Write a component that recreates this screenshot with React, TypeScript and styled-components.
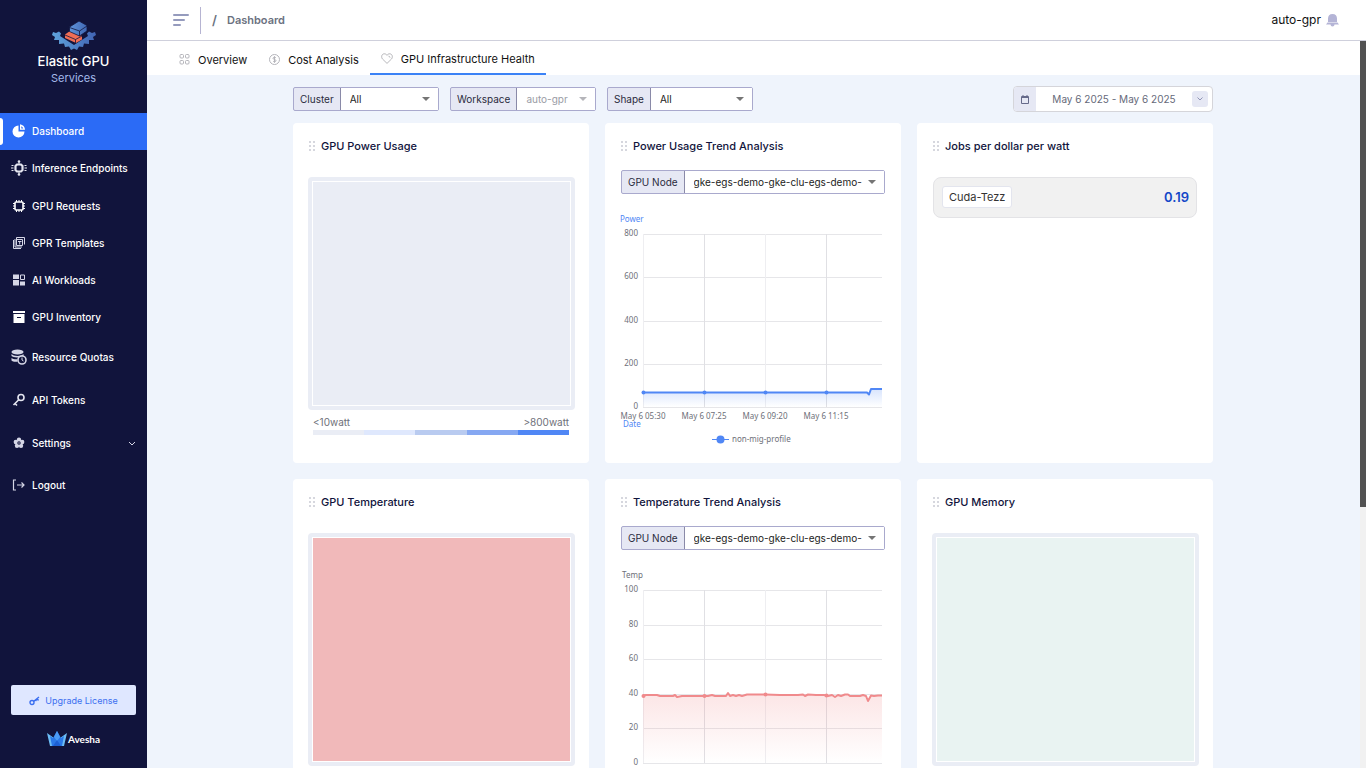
import React from 'react';
import styled, { createGlobalStyle, css } from 'styled-components';

const Global = createGlobalStyle`
  *, *::before, *::after { box-sizing: border-box; }
  html, body, #root { height: 100%; }
  body { margin: 0; overflow: hidden; font-family: Inter, "Open Sans", sans-serif; color: #11143c; }
  button, select, input { font: inherit; }
  svg { display: block; flex: none; }
  h1, h2, p, ul { margin: 0; padding: 0; }
`;

const Shell = styled.div`
  display: flex;
  height: 100vh;
`;

/* ---------- sidebar ---------- */

const Sidebar = styled.aside`
  display: flex;
  flex-direction: column;
  flex: none;
  width: 147px;
  background: #11143c;
  color: #fff;
`;

const Brand = styled.div`
  display: flex;
  flex-direction: column;
  align-items: center;
  height: 113px;
  padding-top: 20px;
`;

const BrandName = styled.div`
  font-size: 13px;
  line-height: 19px;
  font-weight: 500;
`;

const BrandSub = styled.div`
  font-size: 11px;
  line-height: 14px;
  color: #a3b9ea;
`;

const Nav = styled.nav`
  flex: 1;
`;

const NavLink = styled.a<{ $h: number; $active?: boolean }>`
  position: relative;
  display: flex;
  align-items: center;
  gap: 5px;
  height: ${p => p.$h}px;
  padding: 0 11px 1px;
  font-size: 10px;
  font-weight: 500;
  line-height: 16px;
  color: #fff;
  text-decoration: none;
  ${p => p.$active && css`
    background: #2b6bf6;
    &::before {
      content: '';
      position: absolute;
      left: 0;
      top: 5px;
      bottom: 5px;
      width: 3px;
      background: #fff;
      border-radius: 0 3px 3px 0;
    }
  `}
`;

const NavText = styled.span`
  flex: 1;
  white-space: nowrap;
`;

const SideFoot = styled.div`
  display: flex;
  flex-direction: column;
  align-items: center;
  gap: 15px;
  padding: 0 11px 20px;
`;

const Upgrade = styled.button`
  display: flex;
  align-items: center;
  justify-content: center;
  gap: 5px;
  width: 100%;
  height: 30px;
  border: 0;
  border-radius: 2px;
  background: #dfe7ff;
  color: #3b6ff0;
  font-size: 9px;
`;

const Company = styled.div`
  display: flex;
  align-items: center;
  gap: 1px;
  height: 18px;
  font-family: Lato, sans-serif;
  font-size: 10px;
  font-weight: 700;
`;

/* ---------- header ---------- */

const Main = styled.main`
  position: relative;
  display: flex;
  flex-direction: column;
  flex: 1;
  min-width: 0;
  background: #eff4fc;
`;

const TopBar = styled.header`
  display: flex;
  align-items: center;
  flex: none;
  height: 41px;
  padding: 0 27px 0 26px;
  border-bottom: 1px solid #cfd0dc;
  background: #fff;
`;

const MenuButton = styled.button`
  padding: 0;
  border: 0;
  background: none;
`;

const Divider = styled.span`
  width: 1px;
  height: 27px;
  margin: 0 11px;
  background: #b6b4d2;
`;

const Crumb = styled.h1`
  display: flex;
  align-items: center;
  gap: 10px;
  flex: 1;
  font-size: 11px;
  font-weight: 600;
  line-height: 16px;
  color: #6b7280;
`;

const Slash = styled.span`
  font-size: 13px;
`;

const User = styled.div`
  display: flex;
  align-items: center;
  gap: 5px;
  font-size: 12px;
  line-height: 16px;
  color: #111;
`;

const Tabs = styled.nav`
  display: flex;
  flex: none;
  height: 34px;
  padding-left: 21px;
  background: #fff;
`;

const Tab = styled.a<{ $active?: boolean }>`
  display: flex;
  align-items: center;
  gap: 8px;
  padding: ${p => (p.$active ? '3px 11px 0' : '5px 11px 0')};
  border-bottom: 2px solid ${p => (p.$active ? '#3b82f6' : 'transparent')};
  font-size: 11px;
  line-height: 16px;
  color: #111;
  text-decoration: none;
  white-space: nowrap;
`;

/* ---------- content ---------- */

const Scroller = styled.div`
  flex: 1;
  min-height: 0;
  overflow: hidden;
  padding: 11px 7px 0 0;
`;

const Content = styled.div`
  max-width: 920px;
  margin: 0 auto;
`;

const ScrollTrack = styled.div`
  position: absolute;
  top: 41px;
  right: 0;
  bottom: 0;
  width: 6px;
  background: #f1f1f1;
`;

const ScrollThumb = styled.div`
  height: 466px;
  background: #525252;
`;

const Filters = styled.div`
  display: flex;
  align-items: center;
  gap: 11px;
  height: 26px;
  margin-bottom: 11px;
`;

const Field = styled.label<{ $w: string }>`
  display: flex;
  align-items: stretch;
  width: ${p => p.$w};
  height: 24px;
  border: 1px solid #a9a9cd;
  border-radius: 2px;
  background: #e6e8f4;
  font-size: 10px;
  line-height: 22px;
  color: #2a2b3d;
`;

const FieldName = styled.span`
  padding: 0 6px;
  white-space: nowrap;
`;

const SelectWrap = styled.span`
  position: relative;
  display: flex;
  flex: 1;
  min-width: 0;
  border-left: 1px solid #8a8aa8;
  background: #fff;
`;

const Select = styled.select`
  width: 100%;
  padding: 0 19px 0 9px;
  border: 0;
  background: none;
  appearance: none;
  color: #222;
  opacity: 1;
  text-overflow: clip;
  &:disabled { color: #9a9ca5; }
`;

const Caret = styled.svg`
  position: absolute;
  right: 8px;
  top: 9px;
`;

const DateRange = styled.div`
  display: flex;
  align-items: center;
  width: 200px;
  height: 26px;
  margin-left: auto;
  border: 1px solid #d5d5da;
  border-radius: 4px;
  background: #fff;
  overflow: hidden;
`;

const DateIcon = styled.span`
  display: flex;
  align-items: center;
  justify-content: center;
  align-self: stretch;
  width: 22px;
  background: #e6e8f4;
`;

const DateText = styled.span`
  flex: 1;
  text-align: center;
  font-size: 10px;
  line-height: 16px;
  color: #666a7a;
`;

const DateButton = styled.button`
  display: flex;
  align-items: center;
  justify-content: center;
  width: 16px;
  height: 16px;
  margin-right: 4px;
  padding: 0;
  border: 0;
  border-radius: 3px;
  background: #e6e8f4;
`;

const Grid = styled.div`
  display: grid;
  grid-template-columns: repeat(3, 1fr);
  grid-auto-rows: 340px;
  gap: 16px;
`;

const Card = styled.section`
  display: flex;
  flex-direction: column;
  min-width: 0;
  padding: 15px 14px 0 15px;
  border-radius: 4px;
  background: #fff;
`;

const CardTitle = styled.h2`
  display: flex;
  align-items: center;
  gap: 6px;
  margin-bottom: 15px;
  font-size: 11px;
  font-weight: 500;
  line-height: 17px;
  color: #11143c;
`;

const CardField = styled.div`
  margin: 0 2px 0 1px;
`;

const Tile = styled.div<{ $fill: string }>`
  flex: none;
  height: 233px;
  margin-top: 7px;
  padding: 4px;
  border-radius: 4px;
  background: #eaedf5;
  &::before {
    content: '';
    display: block;
    height: 100%;
    border: 1px solid #fff;
    background: ${p => p.$fill};
  }
`;

const Legend = styled.div`
  margin: 4px 6px 0 5px;
`;

const LegendLabels = styled.div`
  display: flex;
  justify-content: space-between;
  font-size: 10px;
  line-height: 16px;
  color: #6e7079;
`;

const LegendBar = styled.div`
  display: flex;
  height: 5px;
`;

const Swatch = styled.span<{ $c: string }>`
  flex: 1;
  background: ${p => p.$c};
`;

const Job = styled.div`
  display: flex;
  align-items: center;
  justify-content: space-between;
  height: 41px;
  margin: 7px 2px 0 1px;
  padding: 0 7px 2px 8px;
  border: 1px solid #e3e3e6;
  border-radius: 8px;
  background: #f1f1f1;
`;

const JobName = styled.span`
  padding: 0 6px;
  border: 1px solid #e3e5ee;
  border-radius: 3px;
  background: #fff;
  font-size: 11px;
  line-height: 20px;
  color: #333;
`;

const JobValue = styled.span`
  font-size: 13px;
  font-weight: 600;
  color: #1447c8;
`;

const Chart = styled.svg`
  margin-top: 16px;
  width: 100%;
  height: 240px;
  overflow: visible;
  font-family: "Noto Sans", sans-serif;
  font-size: 8px;
`;

/* ---------- icons ---------- */

const BrandLogo = () => (
  <svg width="46" height="32" viewBox="0 0 46 32" aria-hidden="true">
    <defs>
      <linearGradient id="gear" x1="0" x2="1"><stop offset="0" stopColor="#5fa3dc" /><stop offset="1" stopColor="#4164b4" /></linearGradient>
      <linearGradient id="brick" x1="0" x2="1"><stop offset="0" stopColor="#6095da" /><stop offset="1" stopColor="#4068b4" /></linearGradient>
    </defs>
    <path fill="url(#gear)" d="M2 12L5 13 8 11.500 10 13.500 9 16 23 25 37 16 36 13.500 38 11.500 41 13 44 12 45 15 42 17 43 20 38 20 38 24 33 23.500 32 27 28 26.500 26 30 23 28.500 20 30 18 26.500 14 27 13 23.500 8 24 8 20 3 20 4 17 1 15z" />
    <path fill="#ef6d55" d="M14 14.500l5-3.500 12 5v3.500L25 23l-11-5z" />
    <path stroke="#11143c" strokeWidth=".8" fill="none" d="M14 15l10.500 4.500 6.500-3.500M24.500 19.500V23" />
    <path fill="url(#brick)" stroke="#11143c" strokeWidth=".8" d="M18.500 7L28 1l8 4.500v5.500l-7.500 5-10-4.500z" />
    <path stroke="#11143c" strokeWidth=".8" fill="none" d="M18.500 7.500l10 3.500 7.500-5M28.500 11v5" />
  </svg>
);

const icons: Record<string, React.ReactNode> = {
  pie: <><path fill="#fff" d="M7.500 2.500a6 6 0 1 0 6 6h-6z" /><path fill="#fff" d="M9 1.200a6 6 0 0 1 5 5.600H9z" /><path fill="#2b6bf6" d="M10.300 3.200a4 4 0 0 1 2 2.200h-2z" /></>,
  endpoint: <><path fill="none" stroke="#e4e5f0" strokeWidth="2.200" d="M6 4.500h4l1.500 1.500v4L10 11.500H6L4.500 10V6z" /><path stroke="#e4e5f0" strokeWidth="1" d="M.5 5.500h2M0 8h2.500M.5 10.500h2M13.500 5.500h2M13.500 8H16M13.500 10.500h2M8 2v2M8 12v2" /><circle cx="8" cy="1.500" r="1.300" fill="#e4e5f0" /><circle cx="8" cy="14.500" r="1.300" fill="#e4e5f0" /></>,
  chip: <><rect x="4" y="4" width="8" height="8" rx="1" fill="none" stroke="#fff" strokeWidth="1.600" /><path stroke="#fff" strokeWidth="1" d="M5.500 2v2M8 2v2M10.500 2v2M5.500 12v2M8 12v2M10.500 12v2M2 5.500h2M2 8h2M2 10.500h2M12 5.500h2M12 8h2M12 10.500h2" /></>,
  templates: <g fill="none" stroke="#d5d6e6"><path d="M5.500 2.500h8v7M5.500 2.500v8h6v-6h-6M2.500 5v8.500H10M4 4v8h7" /><path d="M7 6.500h3.500M8.700 6.500v3" /></g>,
  blocks: <g fill="#d5d6e6"><path d="M2 2.500h6v4.500H2zM2 8h6v5.500H2zM9 9.500h5v4H9z" /><path fill="none" stroke="#d5d6e6" d="M9.500 3h4v4.500h-4z" /></g>,
  archive: <><path fill="#fff" d="M2 2h12v2H2zM2.500 5h11v9h-11z" /><path stroke="#11143c" d="M6 8.500h4" /></>,
  quota: <g fill="#d5d6e6"><ellipse cx="6.500" cy="3" rx="6" ry="2.500" /><path d="M.5 5c2 2.500 10 2.500 12 0v2l-3 1c-4 1-8 0-9-1zM.5 9c1 1 4 1.500 6 1.200v2.500C4 13 1 12.500.5 11.500z" /><circle cx="11" cy="11" r="4" fill="#11143c" stroke="#d5d6e6" strokeWidth="1.600" /><path fill="none" stroke="#d5d6e6" d="M11 8.500V11l1.500 1" /></g>,
  key: <g fill="none" stroke="#e4e5f0" strokeWidth="1.600"><circle cx="10" cy="5.500" r="3" /><path d="M8 7.500L2.500 13M4 11.500l2 2" /></g>,
  gear: <><g fill="#d5d6e6"><circle cx="8" cy="4.700" r="2.200" /><circle cx="11.200" cy="7" r="2.200" /><circle cx="10" cy="10.800" r="2.200" /><circle cx="6" cy="10.800" r="2.200" /><circle cx="4.800" cy="7" r="2.200" /><circle cx="8" cy="8" r="3" /></g><circle cx="8" cy="8" r="1.700" fill="#11143c" /><circle cx="8" cy="8" r=".7" fill="#d5d6e6" /></>,
  logout: <path fill="none" stroke="#d5d6e6" strokeWidth="1.200" d="M5 3H2.500v10H5M6 8h7M10.500 5.500L13 8l-2.500 2.500" />,
};

const NavIcon = ({ name }: { name: string }) => (
  <svg width="16" height="16" viewBox="0 0 16 16" aria-hidden="true">{icons[name]}</svg>
);

const DotsIcon = () => (
  <svg width="7" height="11" viewBox="0 0 7 11" fill="#d6d7de" aria-hidden="true">
    {[0, 4, 8].map(y => [0, 4].map(x => <rect key={`${x}${y}`} x={x + 1} y={y} width="2" height="2" />))}
  </svg>
);

/* ---------- parts ---------- */

const Picker = ({ label, value, width, disabled }: { label: string; value: string; width: string; disabled?: boolean }) => (
  <Field $w={width}>
    <FieldName>{label}</FieldName>
    <SelectWrap>
      <Select disabled={disabled} defaultValue={value}><option>{value}</option></Select>
      <Caret width="8" height="4" viewBox="0 0 8 4"><path d="M0 0h8L4 4z" fill={disabled ? '#b5b5ba' : '#757575'} /></Caret>
    </SelectWrap>
  </Field>
);

const Title = ({ children }: { children: React.ReactNode }) => <CardTitle><DotsIcon />{children}</CardTitle>;

type TrendProps = {
  id: string; name: string; nameColor: string; nameX: number; ticks: number[];
  color: string; line: string; dots: number[];
};

const X_TICKS = [23, 84, 145, 206];
const X_LABELS = ['May 6 05:30', 'May 6 07:25', 'May 6 09:20', 'May 6 11:15'];

const Trend = ({ id, name, nameColor, nameX, ticks, color, line, dots }: TrendProps) => {
  const step = 173 / (ticks.length - 1);
  return (
    <Chart role="img" aria-label={`${name} over time`}>
      <defs>
        <linearGradient id={id} x1="0" x2="0" y1="0" y2="1">
          <stop offset="0" stopColor={color} stopOpacity="0.220" />
          <stop offset="1" stopColor={color} stopOpacity="0" />
        </linearGradient>
      </defs>
      <text x={nameX} y="12" fill={nameColor}>{name}</text>
      {ticks.map((t, i) => {
        const y = Math.round(24 + i * step);
        return (
          <g key={t}>
            <path d={`M23 ${y + 0.5}H262`} stroke="#e6e6e9" />
            <text x="18" y={y + 2} textAnchor="end" fill="#6e7079">{t}</text>
          </g>
        );
      })}
      {X_TICKS.map((x, i) => <path key={x} d={`M${x + 0.5} 24V197`} stroke={i % 2 ? '#e0e0e4' : '#eeeef1'} />)}
      <path d={`${line}V197H23z`} fill={`url(#${id})`} />
      <path d={line} fill="none" stroke={color} strokeWidth="2" strokeLinejoin="round" />
      {dots.map((y, i) => <circle key={i} cx={X_TICKS[i] + 0.5} cy={y} r="2" fill={color} />)}
      {X_LABELS.map((l, i) => <text key={l} x={X_TICKS[i]} y="209" textAnchor="middle" fill="#6e7079">{l}</text>)}
      <text x="3" y="217" fill="#5087f5">Date</text>
      <path d="M92 229.500H109" stroke={color} />
      <circle cx="100.500" cy="229.500" r="4" fill={color} />
      <text x="112" y="232" fill="#6e7079">non-mig-profile</text>
    </Chart>
  );
};

const NAV: [string, string, number][] = [
  ['pie', 'Dashboard', 37], ['endpoint', 'Inference Endpoints', 37], ['chip', 'GPU Requests', 38],
  ['templates', 'GPR Templates', 37], ['blocks', 'AI Workloads', 37], ['archive', 'GPU Inventory', 37],
  ['quota', 'Resource Quotas', 43], ['key', 'API Tokens', 43], ['gear', 'Settings', 43], ['logout', 'Logout', 41],
];

const POWER_LINE = 'M23 182.500H247L249 184.500L251 179H262';
const TEMP_LINE = 'M23 129.500L26 129H37L40 130H53L55 129L57 131L62 130H80L84 130L88 130L92 129L95 130H106L108 127L110 130L113 129L116 130L119 129L122 130L127 128.500H145L160 129H178L183 128.500L185 130L188 128.500L196 129H204L208 130L212 129L215 131L218 129L221 130L225 128.500H228L230 130H240L243 129L246 130L248 135L251 129.500L254 130L258 129.500H262';

const NODE = 'gke-egs-demo-gke-clu-egs-demo-';

export default function App() {
  return (
    <>
      <Global />
      <Shell>
        <Sidebar>
          <Brand>
            <BrandLogo />
            <BrandName>Elastic GPU</BrandName>
            <BrandSub>Services</BrandSub>
          </Brand>
          <Nav>
            {NAV.map(([icon, label, h], i) => (
              <NavLink key={label} href="#" $h={h} $active={i === 0}>
                <NavIcon name={icon} />
                <NavText>{label}</NavText>
                {label === 'Settings' && (
                  <svg width="8" height="5" viewBox="0 0 8 5"><path d="M1 1l3 3 3-3" fill="none" stroke="#d5d6e6" /></svg>
                )}
              </NavLink>
            ))}
          </Nav>
          <SideFoot>
            <Upgrade>
              <svg width="11" height="11" viewBox="0 0 11 11" fill="none" stroke="#3b6ff0" strokeWidth="1.400"><circle cx="3" cy="7.500" r="2" /><path d="M4.500 6.500L10 2M8 3.500L9.500 5.500M6.500 5l1 1" /></svg>
              Upgrade License
            </Upgrade>
            <Company>
              <svg width="20" height="16" viewBox="0 0 20 16"><path fill="#6bbcf5" d="M0 2l7 5-2 8H3zM20 2l-7 5 2 8h2z" /><path fill="#2a78e8" d="M10 0l4 7 3-2-2 10H5L3 5l3 2z" /><path fill="#4b9bf5" d="M10 0l3 6-3 4-3-4z" /><path fill="#1c5fd4" d="M10 9l4 6H6z" /></svg>
              Avesha
            </Company>
          </SideFoot>
        </Sidebar>
        <Main>
          <TopBar>
            <MenuButton aria-label="Toggle menu">
              <svg width="16" height="12" viewBox="0 0 16 12" stroke="#959bbd" strokeWidth="2" strokeLinecap="round"><path d="M1 1h14M1 6h10M1 11h6" /></svg>
            </MenuButton>
            <Divider />
            <Crumb><Slash>/</Slash>Dashboard</Crumb>
            <User>
              auto-gpr
              <svg width="13" height="13" viewBox="0 0 13 13" fill="#b4b4d6"><path d="M6.500 0C9.500 0 11 2 11 4.500V8h-9V4.500C2 2 3.500 0 6.500 0zM1.500 8.500h10l1.500 2H8.500a2 2 0 0 1-4 0H0z" /></svg>
            </User>
          </TopBar>
          <Tabs>
            <Tab href="#">
              <svg width="11" height="11" viewBox="0 0 11 11" fill="none" stroke="#b4b4ba"><rect x="1" y=".5" width="3.500" height="3.500" rx="1" /><rect x="6.500" y=".5" width="3.500" height="3.500" rx="1" /><rect x="1" y="6.500" width="3.500" height="3.500" rx="1" /><rect x="6.500" y="6.500" width="3.500" height="3.500" rx="1" /></svg>
              Overview
            </Tab>
            <Tab href="#">
              <svg width="11" height="11" viewBox="0 0 11 11" fill="none" stroke="#b4b4ba"><circle cx="5.500" cy="5.500" r="5" /><path d="M7 4c-.5-1-3-1-3 .300 0 1.500 3 .8 3 2.400C7 8 4.500 8 4 7M5.500 2.200v6.600" /></svg>
              Cost Analysis
            </Tab>
            <Tab href="#" $active>
              <svg width="12" height="11" viewBox="0 0 12 11" fill="none" stroke="#a4a4aa" strokeWidth=".8"><path d="M6 10.400L1.500 6C0 4.300.5 1 3.200.8 4.500.7 5.500 1.500 6 2.300 6.500 1.500 7.500.7 8.800.8c2.700.2 3.200 3.500 1.700 5.200z" /><path d="M7.500 3.200c1 0 1.500.5 1.500 1.500" /></svg>
              GPU Infrastructure Health
            </Tab>
          </Tabs>
          <Scroller>
            <Content>
              <Filters>
                <Picker label="Cluster" value="All" width="146px" />
                <Picker label="Workspace" value="auto-gpr" width="146px" disabled />
                <Picker label="Shape" value="All" width="146px" />
                <DateRange>
                  <DateIcon>
                    <svg width="8" height="9" viewBox="0 0 8 9" fill="none" stroke="#666a8a"><path d="M.5 1.500h7v7h-7zM.5 2.500h7M2 0v2M6 0v2" /></svg>
                  </DateIcon>
                  <DateText>May 6 2025 - May 6 2025</DateText>
                  <DateButton aria-label="Choose dates">
                    <svg width="6" height="4" viewBox="0 0 6 4"><path d="M.5.5L3 3 5.500.5" fill="none" stroke="#8f93b5" /></svg>
                  </DateButton>
                </DateRange>
              </Filters>
              <Grid>
                <Card>
                  <Title>GPU Power Usage</Title>
                  <Tile $fill="#eaedf5" />
                  <Legend>
                    <LegendLabels><span>&lt;10watt</span><span>&gt;800watt</span></LegendLabels>
                    <LegendBar>
                      {['#eaedf5', '#dfe8fd', '#b9cbf0', '#86a8f2', '#5087f5'].map(c => <Swatch key={c} $c={c} />)}
                    </LegendBar>
                  </Legend>
                </Card>
                <Card>
                  <Title>Power Usage Trend Analysis</Title>
                  <CardField><Picker label="GPU Node" value={NODE} width="100%" /></CardField>
                  <Trend id="power" name="Power" nameColor="#5087f5" nameX={0} ticks={[800, 600, 400, 200, 0]} color="#5087f5" line={POWER_LINE} dots={[182.5, 182.5, 182.5, 182.5]} />
                </Card>
                <Card>
                  <Title>Jobs per dollar per watt</Title>
                  <Job><JobName>Cuda-Tezz</JobName><JobValue>0.19</JobValue></Job>
                </Card>
                <Card>
                  <Title>GPU Temperature</Title>
                  <Tile $fill="#f1b9ba" />
                </Card>
                <Card>
                  <Title>Temperature Trend Analysis</Title>
                  <CardField><Picker label="GPU Node" value={NODE} width="100%" /></CardField>
                  <Trend id="temp" name="Temp" nameColor="#6e7079" nameX={2} ticks={[100, 80, 60, 40, 20, 0]} color="#f08a8c" line={TEMP_LINE} dots={[130, 130, 128.5, 129.5]} />
                </Card>
                <Card>
                  <Title>GPU Memory</Title>
                  <Tile $fill="#e9f3f2" />
                </Card>
              </Grid>
            </Content>
          </Scroller>
          <ScrollTrack><ScrollThumb /></ScrollTrack>
        </Main>
      </Shell>
    </>
  );
}
